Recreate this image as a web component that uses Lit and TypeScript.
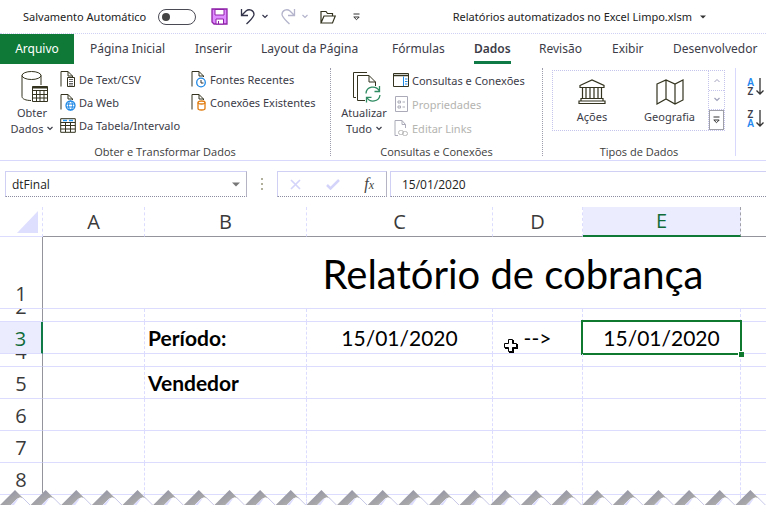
import { LitElement, html, svg, css } from "lit";
import { customElement, state } from "lit/decorators.js";
import { classMap } from "lit/directives/class-map.js";

const page = svg`<path d="M1 15.500V.5H8L12.500 5V6M8 .5V5H12.500" fill="none" stroke="#33331f"/>`;

const chevron = svg`<path d="M.5 1L3 3.500L5.500 1" fill="none" stroke="currentColor" stroke-width="1.200"/>`;

const icons = {
  save: html`<svg width="17" height="17" viewBox="0 0 17 17"><path d="M1 1H16V16H3L1 14Z" fill="#de8cff" stroke="#8f22a8" stroke-width="1.300"/><path d="M4 1.500H13V7H4Z" fill="#fff" stroke="#8f22a8"/><path d="M5 16V11H12.500V16Z" fill="#fff" stroke="#8f22a8"/><path d="M7.500 13V16" stroke="#8f22a8"/></svg>`,
  undo: html`<svg width="16" height="17" viewBox="0 0 16 17"><path d="M1.500 1V7.500H8M1.500 7.500L6 3C9 .5 14 2 14 6.500C14 9 12 10.500 6.500 16" fill="none" stroke="currentColor" stroke-width="1.300"/></svg>`,
  redo: html`<svg width="16" height="17" viewBox="0 0 16 17"><path d="M14.500 1V7.500H8M14.500 7.500L10 3C7 .5 2 2 2 6.500C2 9 4 10.500 9.500 16" fill="none" stroke="currentColor" stroke-width="1.300"/></svg>`,
  chevron: html`<svg width="6" height="5" viewBox="0 0 6 5">${chevron}</svg>`,
  folder: html`<svg width="16" height="14" viewBox="0 0 16 14"><path d="M1 13V1.500H6L7.500 3.500H12.500V6M1 13L4 6H15.300L12.500 13Z" fill="none" stroke="#33331f" stroke-width="1.200"/></svg>`,
  customize: html`<svg width="7" height="8" viewBox="0 0 7 8"><path d="M.5 1H6.500" stroke="#333"/><path d="M.8 4L3.500 6.700L6.200 4Z" fill="#fff" stroke="#333"/></svg>`,
  arrow: html`<svg width="6" height="4" viewBox="0 0 6 4"><path d="M0 .5H6L3 3.500Z" fill="#333"/></svg>`,
  database: html`<svg width="28" height="32" viewBox="0 0 28 32"><g fill="none" stroke="#33331f"><ellipse cx="10.500" cy="4.500" rx="9.500" ry="4"/><path d="M1 4.500V25.500C1 28 5 29.500 10 29.500M20 4.500V14"/><path fill="#fff" d="M11.500 15.500H26.500V30.500H11.500Z"/><path d="M11.500 19.500H26.500M11.500 23.500H26.500M11.500 27H26.500M15.500 19.500V30.500M19 19.500V30.500M23 19.500V30.500"/><path d="M11.500 16.500H26.500" stroke-width="2"/></g></svg>`,
  text: html`<svg width="16" height="17" viewBox="0 0 16 17">${page}<path d="M7.500 6.500H14.500V15.500H7.500Z" fill="#fff" stroke="#33331f"/><path d="M9 8.500H13M9 10.500H13M9 12.500H13M9 14H13" stroke="#666"/></svg>`,
  web: html`<svg width="16" height="17" viewBox="0 0 16 17">${page}<circle cx="10.500" cy="11.500" r="4.500" fill="#fff" stroke="#1e88e5" stroke-width="1.300"/><ellipse cx="10.500" cy="11.500" rx="2" ry="4.500" fill="none" stroke="#1e88e5"/><path d="M6 10H15M6 13H15" stroke="#1e88e5" stroke-width="1.200"/></svg>`,
  table: html`<svg width="16" height="15" viewBox="0 0 16 15"><path d="M.7 .7H15.300V14.300H.7ZM.7 4.500H15.300M.7 7.500H15.300M.7 11H15.300M5.500 4.500V14M10.500 4.500V14" fill="none" stroke="#33331f"/><path d="M3 2.500H7M9 2.500H13" stroke="#2196f3" stroke-width="1.500"/></svg>`,
  recent: html`<svg width="16" height="17" viewBox="0 0 16 17">${page}<circle cx="10" cy="11.500" r="4.300" fill="#fff" stroke="#1e88e5" stroke-width="1.300"/><path d="M10 9V12H12.500" fill="none" stroke="#333"/></svg>`,
  existing: html`<svg width="16" height="17" viewBox="0 0 16 17">${page}<path d="M7 8.500V14.500C7 16.500 14 16.500 14 14.500V8.500" fill="#fff" stroke="#e07c10" stroke-width="1.300"/><ellipse cx="10.500" cy="8.500" rx="3.500" ry="1.500" fill="#fff" stroke="#e07c10" stroke-width="1.300"/></svg>`,
  refresh: html`<svg width="30" height="32" viewBox="0 0 30 32"><g fill="none" stroke="#33331f"><path d="M4 26.500H1.500V1.500H15"/><path d="M13 29.500H5.500V4.500H17L23.500 11V15M17 4.500V11H23.500"/></g><g fill="none" stroke="#2e8b62" stroke-width="1.300"><path d="M14 22.500C14.500 15 24 14 27.500 20M27.500 15V20.500H22.500M28 24C27 31 18 32 15 26.500M14.500 31.500V26.300H19.500"/></g></svg>`,
  queries: html`<svg width="16" height="14" viewBox="0 0 16 14"><path d="M.5 .5H15.500V13.500H.5Z" fill="#fff" stroke="#33331f"/><path d="M0 2.500H16" stroke="#33331f" stroke-width="1.500"/><path d="M10.500 3.500V13M12 6H14.500M12 8.500H14.500M12 11H14.500" stroke="#1e88e5"/></svg>`,
  properties: html`<svg width="13" height="16" viewBox="0 0 13 16"><path d="M.5 .5H12.500V15.500H.5ZM3 5H5.500V7H3ZM3 10H5.500V12H3ZM7.500 6H10M7.500 11H10" fill="none" stroke="#aaaab8"/></svg>`,
  links: html`<svg width="15" height="17" viewBox="0 0 15 17"><path d="M4 15.500H1V.5H8L11.500 4.500V8M8 .5V4.500H11.500" fill="none" stroke="#aaaab8"/><rect x="4.500" y="10.500" width="5" height="4" rx="2" fill="none" stroke="#b8b8b8"/><rect x="8.500" y="11.500" width="5" height="4" rx="2" fill="none" stroke="#b8b8b8"/></svg>`,
  bank: html`<svg width="28" height="26" viewBox="0 0 28 26"><path d="M2 6.500L14 1L26 6.500V8.500H2ZM4.500 8.500V19.500M8 8.500V19.500M12 8.500V19.500M16 8.500V19.500M20 8.500V19.500M23.500 8.500V19.500M3 19.500H25V22H3ZM1 22H27V24.500H1Z" fill="none" stroke="#33331f" stroke-width="1.200"/></svg>`,
  map: html`<svg width="28" height="26" viewBox="0 0 28 26"><path d="M1 5L10 1L19 5L27 1V21L19 25L10 20L1 25ZM10 1V20M19 5V25" fill="none" stroke="#33331f" stroke-width="1.200"/></svg>`,
  down: html`<svg width="8" height="18" viewBox="0 0 8 18"><path d="M4 0V16M.5 12.500L4 16L7.500 12.500" fill="none" stroke="#333" stroke-width="1.300"/></svg>`,
  up: html`<svg width="6" height="5" viewBox="0 0 6 5"><path d="M.5 4L3 1.500L5.500 4" fill="none" stroke="currentColor"/></svg>`,
  cancel: html`<svg width="12" height="11" viewBox="0 0 12 11"><path d="M1 1L10 10M10 1L1 10" stroke="#d4d4fa" stroke-width="1.700"/></svg>`,
  confirm: html`<svg width="14" height="11" viewBox="0 0 14 11"><path d="M1 6L4.500 9.500L13 1" fill="none" stroke="#d4d4fa" stroke-width="2.500"/></svg>`,
  cursor: html`<svg width="16" height="16" viewBox="0 0 16 16"><path d="M6 2H11V6H15V11H11V15H6V11H2V6H6Z" fill="#000"/><path d="M5.500 1.500H9.500V5.500H13.500V9.500H9.500V13.500H5.500V9.500H1.500V5.500H5.500Z" fill="#fff" stroke="#000"/></svg>`,
};

const tabs = ["Arquivo", "Página Inicial", "Inserir", "Layout da Página", "Fórmulas", "Dados", "Revisão", "Exibir", "Desenvolvedor"];
const columns = ["A", "B", "C", "D", "E", ""];

interface Row {
  id: string;
  size: string;
  cells: Record<string, string>;
}

const rows: Row[] = [
  { id: "2", size: "thin", cells: {} },
  { id: "3", size: "", cells: { B: "Período:", C: "15/01/2020", D: "-->", E: "15/01/2020" } },
  { id: "4", size: "thin", cells: {} },
  { id: "5", size: "", cells: { B: "Vendedor" } },
  { id: "6", size: "", cells: {} },
  { id: "7", size: "", cells: {} },
  { id: "8", size: "", cells: {} },
];

@customElement("title-bar")
export class TitleBar extends LitElement {
  static styles = css`
    :host { display: flex; align-items: center; justify-content: space-between; height: 33px; padding: 0 60px 0 23px; border-bottom: 1px dotted #d0d0f4; }
    .quick { display: flex; align-items: center; gap: 12px; }
    .auto { display: flex; align-items: center; width: 176px; gap: 8px; white-space: nowrap; }
    .text { width: 127px; }
    .switch { appearance: none; position: relative; width: 38px; height: 16px; margin: 0; border: 1px solid #4a4a55; border-radius: 8px; background: #fff; }
    .switch::before { content: ""; position: absolute; left: 3px; top: 3px; width: 8px; height: 8px; border-radius: 50%; background: #444; }
    .switch:checked::before { left: 25px; }
    button { display: flex; align-items: center; justify-content: center; gap: 6px; min-width: 16px; height: 20px; padding: 0; border: 0; background: none; color: #33334a; }
    .off { color: #b4b4cc; }
    .name { font: inherit; color: #222; gap: 8px; white-space: nowrap; }
  `;
  render() {
    return html`
      <div class="quick">
        <label class="auto"><span class="text">Salvamento Automático</span><input class="switch" type="checkbox" role="switch" /></label>
        <button aria-label="Salvar">${icons.save}</button>
        <button aria-label="Desfazer">${icons.undo}${icons.chevron}</button>
        <button class="off" aria-label="Refazer">${icons.redo}${icons.chevron}</button>
        <button aria-label="Abrir">${icons.folder}</button>
        <button aria-label="Personalizar">${icons.customize}</button>
      </div>
      <button class="name">Relatórios automatizados no Excel Limpo.xlsm ${icons.arrow}</button>
    `;
  }
}

@customElement("ribbon-tabs")
export class RibbonTabs extends LitElement {
  @state() active = "Dados";
  static styles = css`
    nav { display: grid; grid-template-columns: 74px 105px 66px 131px 82px 65px 73px 61px 1fr; height: 30px; }
    button { display: flex; align-items: center; padding: 0 0 0 16px; border: 0; background: none; font: inherit; font-size: 12px; color: #3c3c48; white-space: nowrap; }
    .file { justify-content: center; padding: 0; background: #0f7a37; color: #fff; }
    span { line-height: 24px; border-bottom: 3px solid transparent; border-top: 3px solid transparent; }
    .active span { font-weight: 600; border-bottom-color: #0f7a45; }
  `;
  render() {
    return html`<nav>
      ${tabs.map((t, i) => html`<button class=${classMap({ file: i === 0, active: t === this.active })} @click=${() => (this.active = t)}><span>${t}</span></button>`)}
    </nav>`;
  }
}

@customElement("ribbon-panel")
export class RibbonPanel extends LitElement {
  static styles = css`
    :host { display: flex; height: 96px; border-bottom: 1px solid #d8d8fc; overflow: hidden; }
    .group { display: flex; flex-direction: column; flex: none; box-sizing: border-box; margin: 4px 0; border-right: 1px dotted #9c9cac; }
    .get { width: 331px; }
    .refresh { width: 212px; }
    .types { width: 193px; border-right: 1px solid #d8d8fc; }
    .body { display: flex; flex: 1; min-height: 0; }
    .label { text-align: center; font-family: "Open Sans", sans-serif; line-height: 9px; color: #3c3c3c; }
    button { padding: 0; border: 0; background: none; font: inherit; color: #3c3c48; white-space: nowrap; }
    .big { display: flex; flex-direction: column; align-items: center; width: 64px; padding-top: 3px; line-height: 16px; }
    .big > svg { display: block; margin: 0 0 2px 5px; }
    .more svg { margin: 0 0 2px 4px; }
    .list { display: flex; flex-direction: column; }
    .item { display: flex; align-items: center; height: 23px; gap: 3px; }
    .glyph { display: flex; justify-content: center; width: 16px; }
    .sources { width: 131px; margin-left: -4px; }
    .refresh .big { margin-left: 1px; }
    .links { margin-left: -3px; }
    .links .item { height: 24px; }
    .item:disabled { color: #b4b4b0; }
    .gallery { display: grid; grid-template-columns: 78px 1fr 16px; flex: 1; box-sizing: border-box; height: 61px; margin: 2px 10px 0 9px; border: 1px dotted #c4c4ec; }
    .kind { display: flex; flex-direction: column; align-items: center; padding-top: 8px; line-height: 16px; gap: 4px; }
    .scroll { display: grid; grid-template-rows: 1fr 1fr 1fr; border-left: 1px dotted #c4c4ec; }
    .scroll button { display: flex; align-items: center; justify-content: center; border-bottom: 1px dotted #c4c4ec; color: #a0a0bc; }
    .scroll .all { border: 1px solid #a0a0a8; }
    .sort { display: flex; flex-direction: column; gap: 14px; padding: 14px 0 0 10px; }
    .sort button { display: flex; align-items: center; gap: 1px; font-weight: 600; font-size: 10px; line-height: 9px; }
    .letters { display: flex; flex-direction: column; width: 9px; }
    .a { color: #1e88f0; }
  `;
  private item(icon: unknown, text: string, disabled = false) {
    return html`<button class="item" ?disabled=${disabled}><span class="glyph">${icon}</span>${text}</button>`;
  }
  render() {
    return html`
      <section class="group get">
        <div class="body">
          <button class="big">${icons.database}<span>Obter</span><span class="more">Dados${icons.chevron}</span></button>
          <div class="list sources">
            ${this.item(icons.text, "De Text/CSV")}${this.item(icons.web, "Da Web")}${this.item(icons.table, "Da Tabela/Intervalo")}
          </div>
          <div class="list">
            ${this.item(icons.recent, "Fontes Recentes")}${this.item(icons.existing, "Conexões Existentes")}
          </div>
        </div>
        <div class="label">Obter e Transformar Dados</div>
      </section>
      <section class="group refresh">
        <div class="body">
          <button class="big">${icons.refresh}<span>Atualizar</span><span class="more">Tudo${icons.chevron}</span></button>
          <div class="list links">
            ${this.item(icons.queries, "Consultas e Conexões")}${this.item(icons.properties, "Propriedades", true)}${this.item(icons.links, "Editar Links", true)}
          </div>
        </div>
        <div class="label">Consultas e Conexões</div>
      </section>
      <section class="group types">
        <div class="body">
          <div class="gallery">
            <button class="kind">${icons.bank}Ações</button>
            <button class="kind">${icons.map}Geografia</button>
            <div class="scroll">
              <button aria-label="Anterior">${icons.up}</button>
              <button aria-label="Próximo">${icons.chevron}</button>
              <button class="all" aria-label="Mais">${icons.customize}</button>
            </div>
          </div>
        </div>
        <div class="label">Tipos de Dados</div>
      </section>
      <div class="sort">
        <button><span class="letters"><span class="a">A</span><span>Z</span></span>${icons.down}</button>
        <button><span class="letters"><span>Z</span><span class="a">A</span></span>${icons.down}</button>
      </div>
    `;
  }
}

@customElement("formula-bar")
export class FormulaBar extends LitElement {
  static styles = css`
    :host { display: flex; height: 26px; padding: 10px 0 10px 5px; font-family: "Open Sans", sans-serif; font-size: 12px; }
    .box { display: flex; align-items: center; box-sizing: border-box; border: 1px solid #d0d0f4; border-bottom: 1px dotted #8c8ca0; border-right-color: #b4b4c4; }
    .ref { width: 242px; padding-right: 6px; }
    input { flex: 1; min-width: 0; padding: 0 0 0 6px; border: 0; outline: 0; background: none; font: inherit; color: #222; }
    button { display: flex; padding: 0; border: 0; background: none; color: #444; }
    .grip { width: 30px; display: flex; flex-direction: column; align-items: center; justify-content: center; gap: 3px; }
    .grip i { width: 2px; height: 2px; background: #b0b09c; }
    .tools { width: 110px; justify-content: space-between; padding: 0 12px; margin-right: 3px; }
    .fx { font: italic 400 16px "Liberation Serif", serif; align-items: baseline; }
    .fx small { font-size: 12px; }
    .value { flex: 1; border-right: 0; padding-left: 5px; }
  `;
  render() {
    return html`
      <div class="box ref"><input aria-label="Caixa de nome" value="dtFinal" /><button aria-label="Nomes"><svg width="8" height="5" viewBox="0 0 8 5"><path d="M0 .5H8L4 4.500Z" fill="#777"/></svg></button></div>
      <div class="grip"><i></i><i></i><i></i></div>
      <div class="box tools">
        <button aria-label="Cancelar">${icons.cancel}</button>
        <button aria-label="Inserir">${icons.confirm}</button>
        <button class="fx">f<small>x</small></button>
      </div>
      <div class="box value"><input aria-label="Barra de fórmulas" value="15/01/2020" /></div>
    `;
  }
}

@customElement("sheet-grid")
export class SheetGrid extends LitElement {
  static styles = css`
    table { width: 100%; table-layout: fixed; border-collapse: separate; border-spacing: 0; font-family: Lato, "Open Sans", sans-serif; font-size: 21px; color: #000; }
    .w-head { width: 43px; }
    .w-A { width: 102px; }
    .w-B { width: 162px; }
    .w-C { width: 186px; }
    .w-D { width: 90px; }
    .w-E { width: 158px; }
    th, td { box-sizing: border-box; padding: 0; border-right: 1px dashed #dcdcff; border-bottom: 1px solid #dcdcff; line-height: 31px; text-align: center; vertical-align: bottom; white-space: nowrap; }
    th { font-family: "Open Sans", sans-serif; font-weight: 400; font-size: 20px; color: #3a3a3a; }
    thead th { height: 30px; line-height: 29px; border-bottom-color: #94949c; }
    .corner { border-bottom-color: #dcdcff; }
    .corner svg { display: block; margin: 3px 3px 3px auto; }
    tbody th { border-right: 1px solid #94949c; }
    th.here, th.current { color: #0f6b38; background: #ececff; }
    thead th.here { border-bottom: 2px solid #0f7a37; border-right-color: #a0a0a8; line-height: 28px; }
    tbody th.current { border-right: 2px solid #0f7a45; }
    td:last-child, thead th:last-child { border-right: 0; }
    td.B { padding-left: 3px; text-align: left; font-weight: 700; }
    .title th { height: 72px; }
    .title td { height: 72px; padding: 3px 0 0 217px; vertical-align: middle; font-size: 40px; line-height: 68px; }
    .num { display: flex; align-items: flex-end; justify-content: center; height: 31px; line-height: 29px; overflow: hidden; }
    .thin .num { height: 12px; }
    td.D, td.selected { position: relative; }
    .frame { position: absolute; inset: -2px; border: 2px solid #0f7a2f; }
    .frame::after { content: ""; position: absolute; right: -4px; bottom: -4px; width: 5px; height: 5px; border: solid #fff; border-width: 1px 0 0 1px; background: #0f7a2f; }
    .cursor { position: absolute; left: 10px; top: 16px; line-height: 0; }
    .last td, .last th { height: 10px; border-bottom: 0; }
  `;
  render() {
    return html`<table>
      <colgroup><col class="w-head" />${columns.map((c) => html`<col class=${c ? `w-${c}` : "rest"} />`)}</colgroup>
      <thead>
        <tr>
          <th class="corner"><svg width="22" height="22" viewBox="0 0 22 22"><path d="M21 0V22H0Z" fill="#dedeff"/></svg></th>
          ${columns.map((c) => html`<th class=${classMap({ here: c === "E" })}>${c}</th>`)}
        </tr>
      </thead>
      <tbody>
        <tr class="title"><th><div class="num">1</div></th><td colspan="6">Relatório de cobrança</td></tr>
        ${rows.map((r) => html`<tr class=${r.size}>
          <th class=${classMap({ current: r.id === "3" })}><div class="num">${r.id}</div></th>
          ${columns.map((c) => {
            const selected = r.id === "3" && c === "E";
            return html`<td class=${classMap({ [c || "rest"]: true, selected })}>${r.cells[c] ?? ""}${selected ? html`<span class="frame"></span>` : ""}${r.id === "3" && c === "D" ? html`<span class="cursor">${icons.cursor}</span>` : ""}</td>`;
          })}
        </tr>`)}
        <tr class="last"><th></th>${columns.map(() => html`<td></td>`)}</tr>
      </tbody>
    </table>`;
  }
}

@customElement("app-root")
export class AppRoot extends LitElement {
  static styles = css`
    :host { display: block; position: relative; overflow: hidden; background: #fff; color: #222; font-family: "Noto Sans", "Open Sans", sans-serif; font-size: 11px; }
    .torn { position: absolute; left: 0; bottom: 0; width: 100%; height: 15px; }
  `;
  render() {
    const teeth = Array.from({ length: 26 }, (_, i) => 15 + i * 30.64);
    return html`
      <title-bar></title-bar>
      <ribbon-tabs></ribbon-tabs>
      <ribbon-panel></ribbon-panel>
      <formula-bar></formula-bar>
      <sheet-grid></sheet-grid>
      <svg class="torn" viewBox="0 0 766 15" preserveAspectRatio="none">
        <defs><linearGradient id="fold" x1="0" y1="0" x2="1" y2="1"><stop offset="0" stop-color="#8c8ca8"/><stop offset=".6" stop-color="#a6a6a8"/><stop offset="1" stop-color="#c4c4c8"/></linearGradient></defs>
        ${teeth.map((x) => svg`<g transform="translate(${x} 0)"><path d="M-15 15L0 0L15 15Z" fill="#fff"/><path d="M-15 15L0 0L11 11Q6 5 2 9L-4 15Z" fill="url(#fold)"/><path d="M-4 15L2 9Q6 5 10 11L13 15Z" fill="#fff"/><path d="M-4 15L2 9L4 8L-1 15Z" fill="#dcdcff"/><path d="M7 7L15 15" stroke="#c8c8e8"/></g>`)}
      </svg>
    `;
  }
}
